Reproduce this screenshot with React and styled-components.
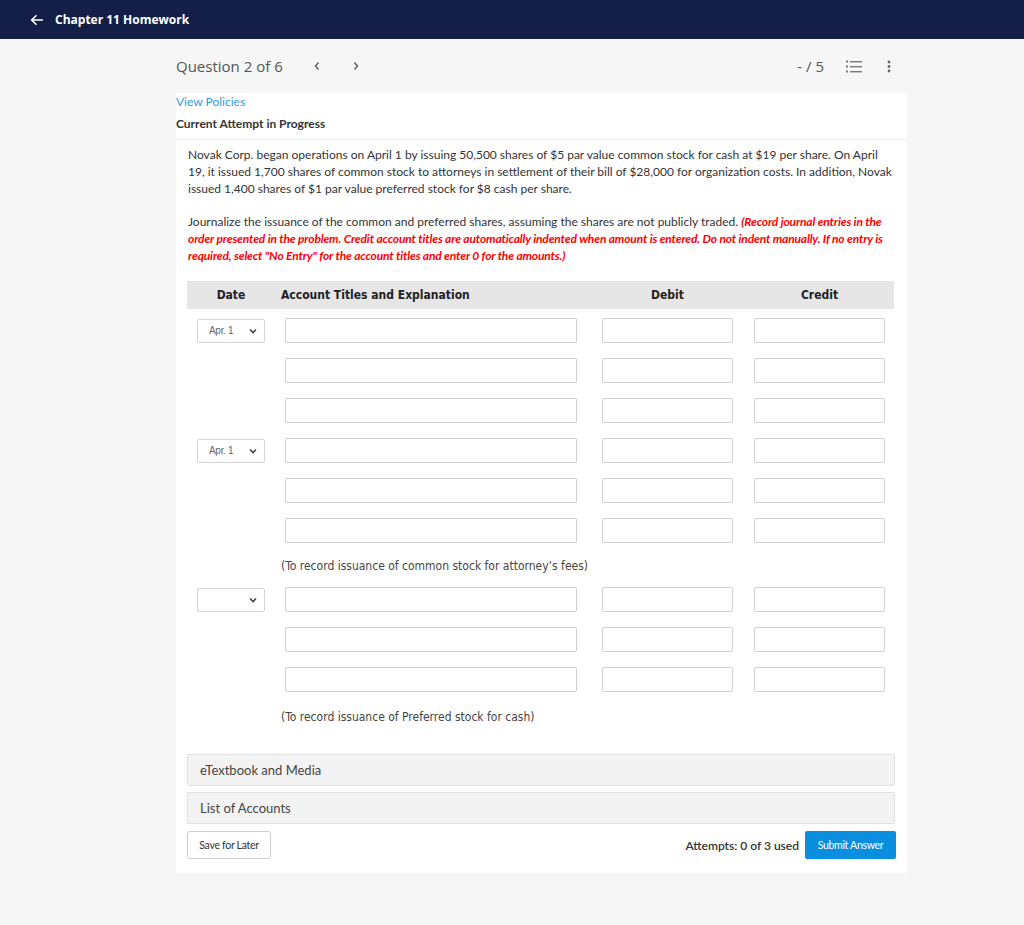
import React from 'react';
import styled, { createGlobalStyle } from 'styled-components';

const GlobalStyle = createGlobalStyle`
  body {
    margin: 0;
    background: #f6f6f6;
    font-family: Lato, "Open Sans", sans-serif;
    color: #333;
  }
`;

const TopBar = styled.header`
  height: 39px;
  background: #141f48;
  display: flex;
  align-items: center;
  padding-left: 30px;
  gap: 11px;
  color: #fff;
  font-family: "Open Sans", sans-serif;
  font-weight: 700;
  font-size: 12px;
`;

const Main = styled.main`
  width: 731px;
  margin-left: 176px;
`;

const QuestionBar = styled.div`
  height: 54px;
  display: flex;
  align-items: center;
  font-family: "Open Sans", sans-serif;
  color: #555;
`;

const QuestionTitle = styled.span`
  font-size: 15px;
`;

const NavArrow = styled.button`
  border: 0;
  background: none;
  padding: 0;
  margin-left: ${(p) => p.$gap}px;
  color: #555;
  display: flex;
  align-items: center;
`;

const Score = styled.span`
  margin-left: auto;
  font-size: 15px;
  margin-right: 22px;
`;

const IconButton = styled.span`
  display: flex;
  align-items: center;
  margin-right: ${(p) => p.$right}px;
`;

const Panel = styled.section`
  background: #fff;
  padding-bottom: 14px;
`;

const PolicyLink = styled.a`
  display: block;
  color: #2f9ae0;
  font-size: 12px;
  line-height: 16px;
  padding-top: 1px;
  text-decoration: none;
`;

const AttemptTitle = styled.div`
  font-weight: 700;
  font-size: 12px;
  line-height: 16px;
  margin-top: 6px;
  padding-bottom: 7px;
  border-bottom: 1px solid #eee;
`;

const Body = styled.div`
  padding: 0 11px 0 12px;
`;

const Para = styled.p`
  font-size: 12px;
  line-height: 17px;
  margin: ${(p) => p.$top}px 0 0;
  color: #333;
`;

const Hint = styled.span`
  color: #f00;
  font-style: italic;
  font-weight: 700;
  letter-spacing: -0.15px;
`;

const Table = styled.div`
  width: 707px;
  margin-left: -1px;
  margin-top: 17px;
`;

const HeadRow = styled.div`
  display: grid;
  grid-template-columns: 88px 315px 155px 149px;
  height: 28px;
  align-items: center;
  background: #e6e6e6;
  font-family: "DejaVu Sans Condensed", "DejaVu Sans", sans-serif;
  font-weight: 700;
  font-size: 12px;
  color: #222;
`;

const HeadCell = styled.div`
  text-align: ${(p) => (p.$left ? 'left' : 'center')};
  padding-left: ${(p) => (p.$left ? '6px' : '0')};
`;

const Group = styled.div`
  display: flex;
  flex-direction: column;
  gap: 15px;
  padding-top: ${(p) => p.$top}px;
`;

const EntryRow = styled.div`
  display: grid;
  grid-template-columns: 88px 315px 155px 149px;
  height: 25px;
  align-items: center;
`;

const DateSelect = styled.div`
  width: 68px;
  height: 24px;
  box-sizing: border-box;
  margin-left: 10px;
  border: 1px solid #d4d4d4;
  border-radius: 2px;
  display: flex;
  align-items: center;
  justify-content: space-between;
  padding: 0 6px 0 11px;
  font-family: "Liberation Sans", Arial, sans-serif;
  font-size: 10px;
  color: #666;
  letter-spacing: -0.3px;
`;

const TextField = styled.div`
  width: ${(p) => p.$w}px;
  height: 25px;
  box-sizing: border-box;
  border: 1px solid #d0d0d0;
  border-radius: 2px;
  background: #fff;
  justify-self: ${(p) => (p.$center ? 'center' : 'start')};
  margin-left: ${(p) => (p.$center ? 0 : 10)}px;
`;

const Note = styled.div`
  margin: ${(p) => p.$top}px 0 0 94px;
  line-height: 16px;
  font-family: "DejaVu Sans Condensed", "DejaVu Sans", sans-serif;
  font-size: 12px;
  color: #444;
`;

const Accordion = styled.div`
  width: 708px;
  height: 32px;
  box-sizing: border-box;
  margin: ${(p) => p.$top}px 0 0 -1px;
  background: #f3f3f3;
  border: 1px solid #e2e2e2;
  border-radius: 2px;
  display: flex;
  align-items: center;
  padding-left: 12px;
  font-size: 13px;
  color: #444;
`;

const Footer = styled.div`
  display: flex;
  align-items: center;
  margin: 7px 0 0 -1px;
  width: 709px;
`;

const SaveButton = styled.button`
  height: 28px;
  width: 84px;
  background: #fff;
  border: 1px solid #ccc;
  border-radius: 3px;
  font-family: Lato, sans-serif;
  font-size: 10.5px;
  color: #333;
  letter-spacing: -0.3px;
`;

const Attempts = styled.span`
  margin-left: auto;
  margin-right: 6px;
  font-size: 12px;
  font-weight: 600;
  color: #333;
`;

const SubmitButton = styled.button`
  height: 28px;
  width: 91px;
  background: #0a8fe0;
  border: 0;
  border-radius: 2px;
  font-family: Lato, sans-serif;
  font-size: 10.5px;
  color: #fff;
  letter-spacing: -0.3px;
`;

const Chevron = () => (
  <svg width="10" height="8" viewBox="0 0 10 8">
    <path d="M2 2.5l3 3 3-3" fill="none" stroke="#444" strokeWidth="1.6" />
  </svg>
);

function JournalRow({ date }) {
  return (
    <EntryRow>
      {date !== undefined ? (
        <DateSelect>
          <span>{date}</span>
          <Chevron />
        </DateSelect>
      ) : (
        <div />
      )}
      <TextField $w={292} />
      <TextField $w={131} $center />
      <TextField $w={131} $center />
    </EntryRow>
  );
}

// spacing above each entry block and below its caption
const entries = [
  { date: 'Apr. 1', top: 9, note: null },
  { date: 'Apr. 1', top: 15, note: '(To record issuance of common stock for attorney\u2019s fees)', noteTop: 15 },
  { date: '', top: 13, note: '(To record issuance of Preferred stock for cash)', noteTop: 17 },
];

export default function App() {
  return (
    <>
      <GlobalStyle />
      <TopBar>
        <svg width="14" height="12" viewBox="0 0 14 12">
          <path d="M13 6H2M6.5 1.2L1.7 6l4.8 4.8" fill="none" stroke="#fff" strokeWidth="1.6" />
        </svg>
        <span>Chapter 11 Homework</span>
      </TopBar>
      <Main>
        <QuestionBar>
          <QuestionTitle>Question 2 of 6</QuestionTitle>
          <NavArrow $gap={30}>
            <svg width="8" height="10" viewBox="0 0 8 10">
              <path d="M5.5 1.5L2.5 5l3 3.5" fill="none" stroke="#555" strokeWidth="1.3" />
            </svg>
          </NavArrow>
          <NavArrow $gap={31}>
            <svg width="8" height="10" viewBox="0 0 8 10">
              <path d="M2.5 1.5L5.5 5l-3 3.5" fill="none" stroke="#555" strokeWidth="1.3" />
            </svg>
          </NavArrow>
          <Score>- / 5</Score>
          <IconButton $right={25}>
            <svg width="16" height="13" viewBox="0 0 16 13">
              <g fill="#777">
                <rect x="0" y="0.5" width="2" height="2" />
                <rect x="0" y="5.5" width="2" height="2" />
                <rect x="0" y="10.5" width="2" height="2" />
                <rect x="4" y="1" width="12" height="1.4" />
                <rect x="4" y="6" width="12" height="1.4" />
                <rect x="4" y="11" width="12" height="1.4" />
              </g>
            </svg>
          </IconButton>
          <IconButton $right={16}>
            <svg width="4" height="13" viewBox="0 0 4 13">
              <g fill="#666">
                <circle cx="2" cy="2" r="1.4" />
                <circle cx="2" cy="6.5" r="1.4" />
                <circle cx="2" cy="11" r="1.4" />
              </g>
            </svg>
          </IconButton>
        </QuestionBar>
        <Panel>
          <PolicyLink href="#">View Policies</PolicyLink>
          <AttemptTitle>Current Attempt in Progress</AttemptTitle>
          <Body>
            <Para $top={6}>
              Novak Corp. began operations on April 1 by issuing 50,500 shares of $5 par value common stock for cash at
              $19 per share. On April 19, it issued 1,700 shares of common stock to attorneys in settlement of their bill
              of $28,000 for organization costs. In addition, Novak issued 1,400 shares of $1 par value preferred stock
              for $8 cash per share.
            </Para>
            <Para $top={16}>
              Journalize the issuance of the common and preferred shares, assuming the shares are not publicly traded.{' '}
              <Hint>
                (Record journal entries in the order presented in the problem. Credit account titles are automatically
                indented when amount is entered. Do not indent manually. If no entry is required, select "No Entry" for
                the account titles and enter 0 for the amounts.)
              </Hint>
            </Para>
            <Table>
              <HeadRow>
                <HeadCell>Date</HeadCell>
                <HeadCell $left>Account Titles and Explanation</HeadCell>
                <HeadCell>Debit</HeadCell>
                <HeadCell>Credit</HeadCell>
              </HeadRow>
              {entries.map((entry, i) => (
                <React.Fragment key={i}>
                  <Group $top={entry.top}>
                    <JournalRow date={entry.date} />
                    <JournalRow />
                    <JournalRow />
                  </Group>
                  {entry.note && <Note $top={entry.noteTop}>{entry.note}</Note>}
                </React.Fragment>
              ))}
            </Table>
            <Accordion $top={29}>eTextbook and Media</Accordion>
            <Accordion $top={6}>List of Accounts</Accordion>
            <Footer>
              <SaveButton>Save for Later</SaveButton>
              <Attempts>Attempts: 0 of 3 used</Attempts>
              <SubmitButton>Submit Answer</SubmitButton>
            </Footer>
          </Body>
        </Panel>
      </Main>
    </>
  );
}
